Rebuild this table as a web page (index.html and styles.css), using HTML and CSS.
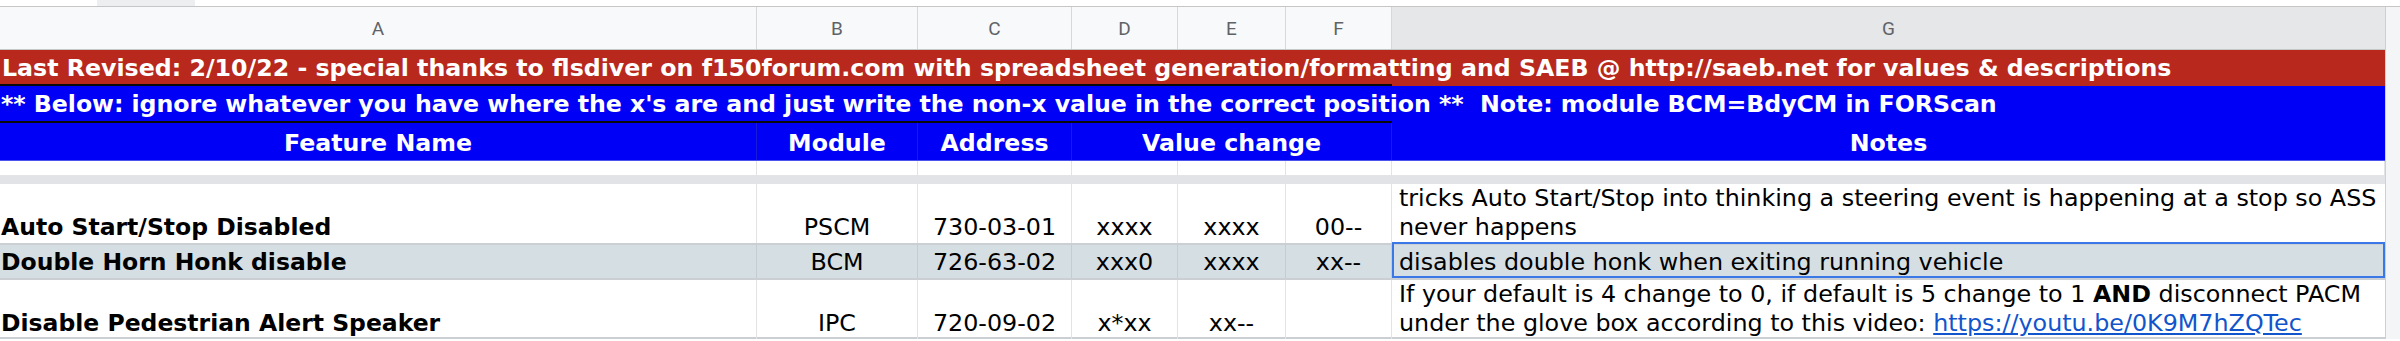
FILE: index.html
```html
<!DOCTYPE html>
<html>
<head>
<meta charset="utf-8">
<link rel="stylesheet" href="styles.css">
</head>
<body>
<div class="sheet">
  <div class="topstrip"><div class="topthumb"></div></div>
  <div class="main">
    <div class="grid">
      <div class="colhdrs row">
        <div class="ch">A</div><div class="ch">B</div><div class="ch">C</div><div class="ch">D</div><div class="ch">E</div><div class="ch">F</div><div class="ch active">G</div>
      </div>
      <div class="row banner red">
        <div class="bcell span6 ruled">Last Revised: 2/10/22 - special thanks to flsdiver on f150forum.com with spreadsheet generation/formatting and SAEB @ http://saeb.net for values &amp; descriptions</div>
        <div class="bcell"></div>
      </div>
      <div class="row banner blue">
        <div class="bcell span6 ruled tight">** Below: ignore whatever you have where the x's are and just write the non-x value in the correct position **&nbsp; Note: module BCM=BdyCM in FORScan</div>
        <div class="bcell"></div>
      </div>
      <div class="row thead">
        <div class="th">Feature Name</div>
        <div class="th">Module</div>
        <div class="th">Address</div>
        <div class="th span3">Value change</div>
        <div class="th last">Notes</div>
      </div>
      <div class="row blank">
        <div></div><div></div><div></div><div></div><div></div><div></div><div></div>
      </div>
      <div class="freeze"></div>
      <div class="row data tall">
        <div class="td name">Auto Start/Stop Disabled</div>
        <div class="td c">PSCM</div>
        <div class="td c">730-03-01</div>
        <div class="td c">xxxx</div>
        <div class="td c">xxxx</div>
        <div class="td c">00--</div>
        <div class="td note">tricks Auto Start/Stop into thinking a steering event is happening at a stop so ASS never happens</div>
      </div>
      <div class="row data short sel">
        <div class="td name">Double Horn Honk disable</div>
        <div class="td c">BCM</div>
        <div class="td c">726-63-02</div>
        <div class="td c">xxx0</div>
        <div class="td c">xxxx</div>
        <div class="td c">xx--</div>
        <div class="td note active">disables double honk when exiting running vehicle</div>
      </div>
      <div class="row data tall2">
        <div class="td name">Disable Pedestrian Alert Speaker</div>
        <div class="td c">IPC</div>
        <div class="td c">720-09-02</div>
        <div class="td c">x*xx</div>
        <div class="td c">xx--</div>
        <div class="td c"></div>
        <div class="td note">If your default is 4 change to 0, if default is 5 change to 1 <b>AND</b> disconnect PACM under the glove box according to this video: <a href="#">https://youtu.be/0K9M7hZQTec</a></div>
      </div>
    </div>
    <div class="vscroll"></div>
  </div>
</div>
</body>
</html>
```

FILE: styles.css
```css
html, body {
  margin: 0;
  padding: 0;
  background: #ffffff;
}
body {
  width: 2400px;
  height: 341px;
  overflow: hidden;
  font-family: "DejaVu Sans", "Liberation Sans", sans-serif;
}
.sheet {
  display: flex;
  flex-direction: column;
}
.topstrip {
  height: 6px;
  border-bottom: 1px solid #c6c6c6;
  background: #ffffff;
}
.topthumb {
  margin-left: 97px;
  width: 98px;
  height: 6px;
  background: #eceef0;
}
.main {
  display: flex;
}
.grid {
  width: 2385px;
  display: flex;
  flex-direction: column;
}
.vscroll {
  width: 14px;
  border-left: 1px solid #d0d0d0;
  background: #f4f5f6;
}
.row {
  display: grid;
  grid-template-columns: 757px 161px 154px 106px 108px 106px 993px;
}
.colhdrs {
  height: 42px;
  background: #f8f9fa;
  border-bottom: 1px solid #c4c7c5;
}
.ch {
  display: flex;
  align-items: center;
  justify-content: center;
  font-family: Roboto, "Liberation Sans", sans-serif;
  font-size: 19px;
  color: #5f6368;
  border-right: 1px solid #d6d8da;
}
.ch.active {
  background: #e6e7e9;
  border-right: none;
}
.banner {
  color: #ffffff;
  font-weight: bold;
  font-size: 23.7px;
}
.red {
  background: #b8281d;
  height: 36px;
}
.blue {
  background: #0000f6;
  height: 37px;
}
.bcell {
  white-space: nowrap;
  display: flex;
  align-items: center;
  padding-left: 2px;
  padding-top: 1px;
  box-sizing: border-box;
}
.bcell.tight {
  letter-spacing: -0.06px;
  padding-left: 1px;
}
.span6 {
  grid-column: 1 / 7;
}
.ruled {
  border-bottom: 2px solid #0a0a0a;
}
.thead {
  height: 37px;
  background: #0000f6;
  border-bottom: 1px solid #4a55ee;
  color: #ffffff;
  font-weight: bold;
  font-size: 23.7px;
}
.th {
  display: flex;
  align-items: center;
  justify-content: center;
  border-right: 1px solid #1a1ad8;
  padding-top: 2px;
}
.th.span3 {
  grid-column: 4 / 7;
}
.th.last {
  border-right: none;
}
.blank {
  height: 14px;
}
.blank > div {
  border-right: 1px solid #e2e3e4;
}
.freeze {
  height: 9px;
  background: #e1e3e6;
}
.data {
  border-bottom: 2px solid #cbcfd3;
  font-size: 23.8px;
  color: #000000;
}
.tall { height: 59px; }
.short { height: 33px; }
.tall2 { height: 57px; }
.sel {
  background: #d5dee3;
}
.td {
  display: flex;
  align-items: flex-end;
  border-right: 1px solid #e2e3e4;
  padding: 0 2px 1px 2px;
  line-height: 29px;
  white-space: nowrap;
}
.sel .td {
  border-right-color: #c5cdd2;
}
.td.name {
  font-weight: bold;
  font-size: 23.5px;
  padding-left: 1px;
}
.td.c {
  justify-content: center;
}
.td.note {
  white-space: normal;
  padding-left: 7px;
  padding-right: 0;
  border-right: none;
  display: block;
  align-self: end;
}
.td.note.active {
  align-self: stretch;
  display: flex;
  outline: 2px solid #3b78e7;
  outline-offset: -2px;
  margin-top: -3px;
  padding-bottom: 1px;
}
.td.note b {
  font-weight: bold;
}
.td.note a {
  color: #1155cc;
  text-decoration: underline;
}
```
